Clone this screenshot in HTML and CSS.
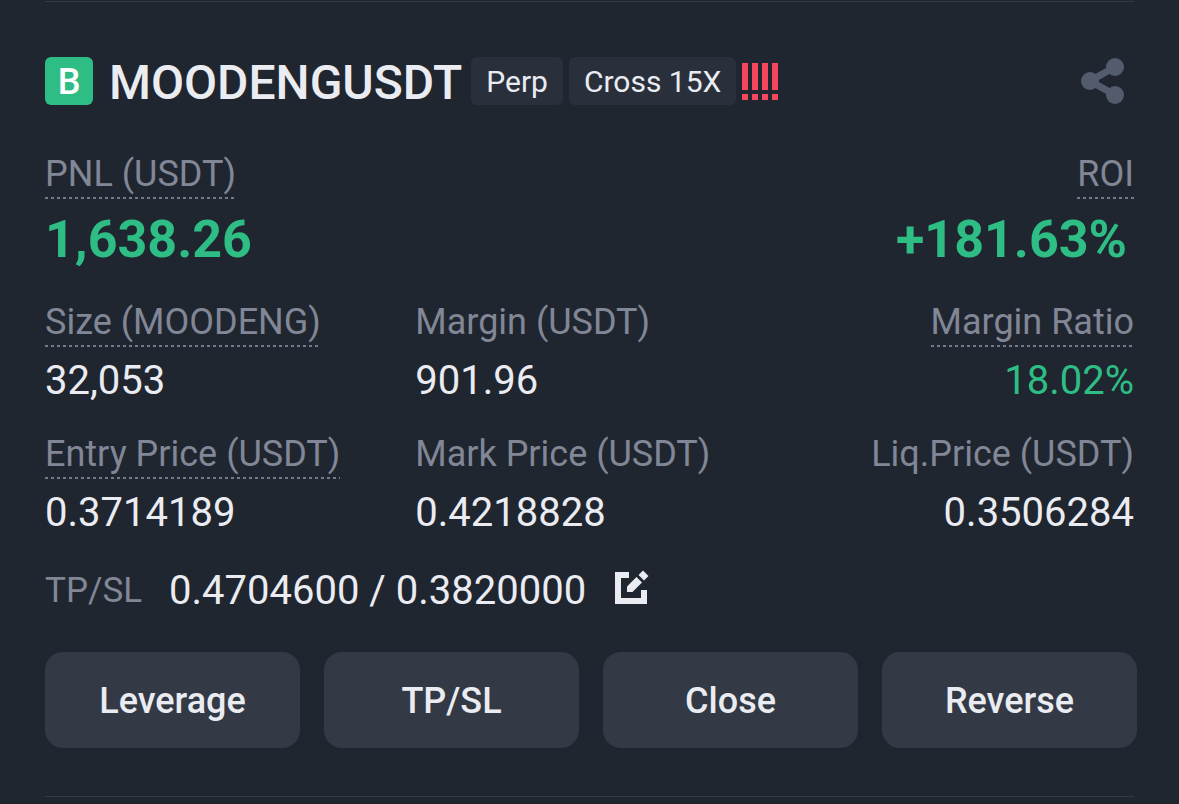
FILE: index.html
```html
<!DOCTYPE html>
<html lang="en">
<head>
  <meta charset="UTF-8" />
  <meta name="viewport" content="width=device-width, initial-scale=1.0"/>
  <title>MOODENGUSDT Perp</title>
  <link rel="stylesheet" href="styles.css">
</head>
<body>

  <main class="position">

    <!-- Symbol -->
    <header class="top">
      <span class="side">B</span>
      <h1>MOODENGUSDT</h1>
      <span class="tag">Perp</span>
      <span class="tag">Cross 15X</span>
      <svg class="risk" viewBox="0 0 36 37" aria-hidden="true">
        <path d="M0 0h6v27H0zM10 0h6v27h-6zM20 0h6v27h-6zM30 0h6v27h-6zM0 31h6v6H0zM10 31h6v6h-6zM20 31h6v6h-6zM30 31h6v6h-6z"/>
      </svg>
      <button class="icon-btn share" aria-label="Share">
        <svg viewBox="0 0 44 46" aria-hidden="true">
          <path d="M34 9L9 23l25 14" fill="none" stroke="currentColor" stroke-width="7"/>
          <circle cx="34" cy="9" r="9"/>
          <circle cx="9" cy="23" r="9"/>
          <circle cx="34" cy="37" r="9"/>
        </svg>
      </button>
    </header>

    <!-- Profit -->
    <dl class="stats profit">
      <div class="stat">
        <dt class="hint">PNL (USDT)</dt>
        <dd class="big">1,638.26</dd>
      </div>
      <div class="stat right">
        <dt class="hint">ROI</dt>
        <dd class="big">+181.63%</dd>
      </div>
    </dl>

    <!-- Details -->
    <dl class="stats details">
      <div class="stat">
        <dt class="hint">Size (MOODENG)</dt>
        <dd>32,053</dd>
      </div>
      <div class="stat">
        <dt>Margin (USDT)</dt>
        <dd>901.96</dd>
      </div>
      <div class="stat right">
        <dt class="hint">Margin Ratio</dt>
        <dd class="up">18.02%</dd>
      </div>
      <div class="stat">
        <dt class="hint">Entry Price (USDT)</dt>
        <dd>0.3714189</dd>
      </div>
      <div class="stat">
        <dt>Mark Price (USDT)</dt>
        <dd>0.4218828</dd>
      </div>
      <div class="stat right">
        <dt>Liq.Price (USDT)</dt>
        <dd>0.3506284</dd>
      </div>
    </dl>

    <div class="tpsl">
      <span class="tpsl-label">TP/SL</span>
      <span class="tpsl-value">0.4704600 / 0.3820000</span>
      <button class="icon-btn edit" aria-label="Edit TP/SL">
        <svg viewBox="0 0 34 34" aria-hidden="true">
          <path d="M0 2h14v6H6v20h20v-8h6v14H0z"/>
          <path d="M12 16.500L21.500 7l5.500 5.500L17.500 22H12z"/>
          <path d="M23.500 5L28 .5 33.500 6 29 10.500z"/>
        </svg>
      </button>
    </div>

    <!-- Actions -->
    <div class="btns">
      <button>Leverage</button>
      <button>TP/SL</button>
      <button>Close</button>
      <button>Reverse</button>
    </div>

  </main>

</body>
</html>
```
FILE: styles.css
```css
* { margin: 0; padding: 0; box-sizing: border-box; }
body { background: #20262f; color: #eaecf2; font-family: Roboto, "Liberation Sans", sans-serif; }
button { border: none; color: inherit; font-family: inherit; cursor: pointer; }

.position {
  margin: 1px 45px 0; padding: 55px 0 48px;
  border-top: 1px solid #333b47; border-bottom: 1px solid #333b47;
}

.top { display: flex; align-items: center; height: 48px; }
.side {
  width: 48px; height: 48px; margin-right: 16px; border-radius: 6px;
  background: #2ebd85; color: #fff; font-size: 36px; font-weight: 500;
  line-height: 50px; text-align: center;
}
h1 { margin-right: 9px; padding-top: 4px; font-size: 48px; font-weight: 500; line-height: 48px; }
.tag {
  height: 48px; margin-right: 6px; padding: 0 15px; border-radius: 6px;
  background: #29303c; font-size: 30px; line-height: 50px; white-space: nowrap;
}
.risk { width: 36px; height: 37px; fill: #f6465d; }

.icon-btn { background: none; }
.icon-btn svg { display: block; width: 100%; height: 100%; fill: currentColor; }
.share { width: 44px; height: 46px; margin-left: auto; margin-right: 9px; color: #535c6d; }
.edit { width: 34px; height: 34px; margin-left: 29px; margin-bottom: 6px; }

.stats { display: grid; row-gap: 32px; }
.profit { grid-template-columns: 1fr 1fr; margin-top: 49px; }
.details { grid-template-columns: 34fr 33fr 33fr; margin-top: 32px; }

.stat { display: flex; flex-direction: column; align-items: flex-start; }
.right { align-items: flex-end; }
.stat dt {
  height: 45px; color: #818796; font-size: 36px; line-height: 40px; white-space: nowrap;
}
.hint {
  background: repeating-linear-gradient(90deg, #747c8b 0 3px, transparent 3px 6px) left bottom / 100% 2px no-repeat;
}
.stat dd { margin-top: 11px; font-size: 40px; line-height: 46px; }
.details dd { margin-bottom: -2px; }
.stat .big { color: #2ebd85; font-size: 52px; font-weight: 700; line-height: 60px; }
.right .big { padding-right: 7px; }
.stat .up { color: #2ebd85; }

.tpsl { display: flex; align-items: center; height: 44px; margin-top: 34px; }
.tpsl-label { margin-right: 27px; color: #818796; font-size: 35px; }
.tpsl-value { font-size: 40px; }

.btns {
  display: grid; grid-template-columns: repeat(4, 1fr); gap: 24px; margin: 40px -3px 0 0;
}
.btns button {
  height: 96px; padding-top: 2px; border-radius: 18px; background: #333a45;
  font-size: 36px; font-weight: 500;
}
```
